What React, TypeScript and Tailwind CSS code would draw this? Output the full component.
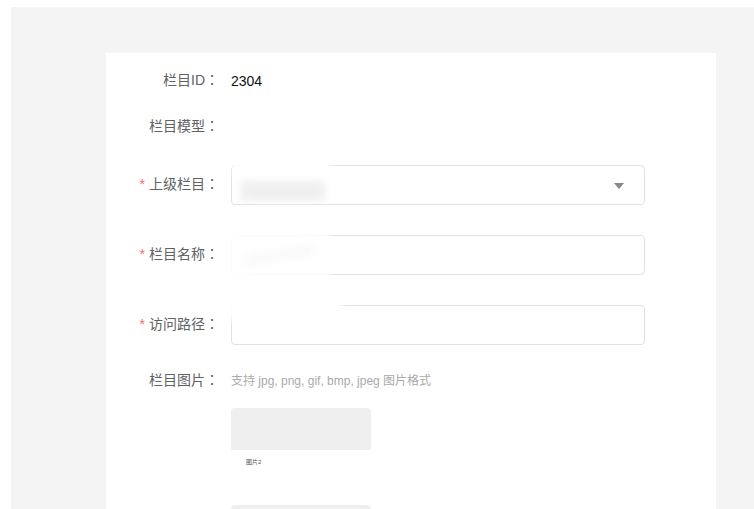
import React from "react";

const font = { fontFamily: '"Liberation Sans", "Noto Sans CJK SC", sans-serif' };
const tc = { fontFamily: '"Noto Sans CJK TC", sans-serif' };

function Label({ text, required }: { text: string; required?: boolean }) {
  return (
    <div className="w-[125px] shrink-0 pr-[12px] text-right text-[14px] text-[#606266] leading-[20px] -mt-[3px]">
      {required && <span className="text-[#f56c6c] mr-[4px]">*</span>}
      {text}
      <span style={tc} className="leading-none">：</span>
    </div>
  );
}

function Box({ children, overlay }: { children?: React.ReactNode; overlay?: React.ReactNode }) {
  return (
    <div className="relative w-[414px] h-[40px]">
      <div className="absolute inset-0 rounded-[4px] border border-[#e2e2e2] bg-white overflow-hidden">
        {children}
      </div>
      {overlay}
    </div>
  );
}

export default function App() {
  return (
    <div style={font} className="bg-white pl-[11px] pt-[7px] h-[509px] overflow-hidden">
      <div className="bg-[#f4f4f4] pl-[95px] pr-[38px] pt-[46px] h-[502px]">
        <div className="bg-white w-[610px] h-[460px] pt-[8px]">
          <div className="flex items-center h-[40px]">
            <Label text="栏目ID" />
            <div className="text-[14px] text-[#111]">2304</div>
          </div>
          <div className="flex items-center h-[40px] mt-[6px]">
            <Label text="栏目模型" />
          </div>
          <div className="flex items-center h-[40px] mt-[18px]">
            <Label text="上级栏目" required />
            <Box
              overlay={
                <>
                  <div className="absolute left-[2px] top-[-4px] w-[98px] h-[14px] bg-white blur-[3px]" />
                  <div className="absolute left-[10px] top-[16px] w-[84px] h-[20px] bg-[#efefef] blur-[4px]" />
                </>
              }
            >
              <div className="absolute right-[20px] top-[17px] w-0 h-0 border-l-[5px] border-r-[5px] border-t-[6px] border-l-transparent border-r-transparent border-t-[#888]" />
            </Box>
          </div>
          <div className="flex items-center h-[40px] mt-[30px]">
            <Label text="栏目名称" required />
            <Box
              overlay={
                <>
                  <div className="absolute left-[-3px] top-[-3px] w-[102px] h-[46px] bg-white blur-[3px]" />
                  <div className="absolute left-[14px] top-[16px] w-[70px] h-[8px] bg-[#f7f7f7] blur-[4px] -rotate-[10deg]" />
                </>
              }
            />
          </div>
          <div className="flex items-center h-[40px] mt-[30px]">
            <Label text="访问路径" required />
            <Box
              overlay={
                <div className="absolute left-[-3px] top-[-4px] w-[114px] h-[20px] bg-white blur-[3px]" />
              }
            />
          </div>
          <div className="flex items-center h-[40px] mt-[16px]">
            <Label text="栏目图片" />
            <div className="text-[12px] text-[#aaaaaa]">支持 jpg, png, gif, bmp, jpeg 图片格式</div>
          </div>
          <div className="pl-[125px] mt-[7px]">
            <div className="w-[140px]">
              <div className="h-[42px] bg-[#efefef] rounded-t-[4px]" />
              <div className="h-[55px] pt-[8px] pl-[15px] text-[6px] text-[#555] leading-[8px]">图片2</div>
              <div className="h-[20px] bg-[#efefef] rounded-t-[4px]" />
            </div>
          </div>
        </div>
      </div>
    </div>
  );
}
